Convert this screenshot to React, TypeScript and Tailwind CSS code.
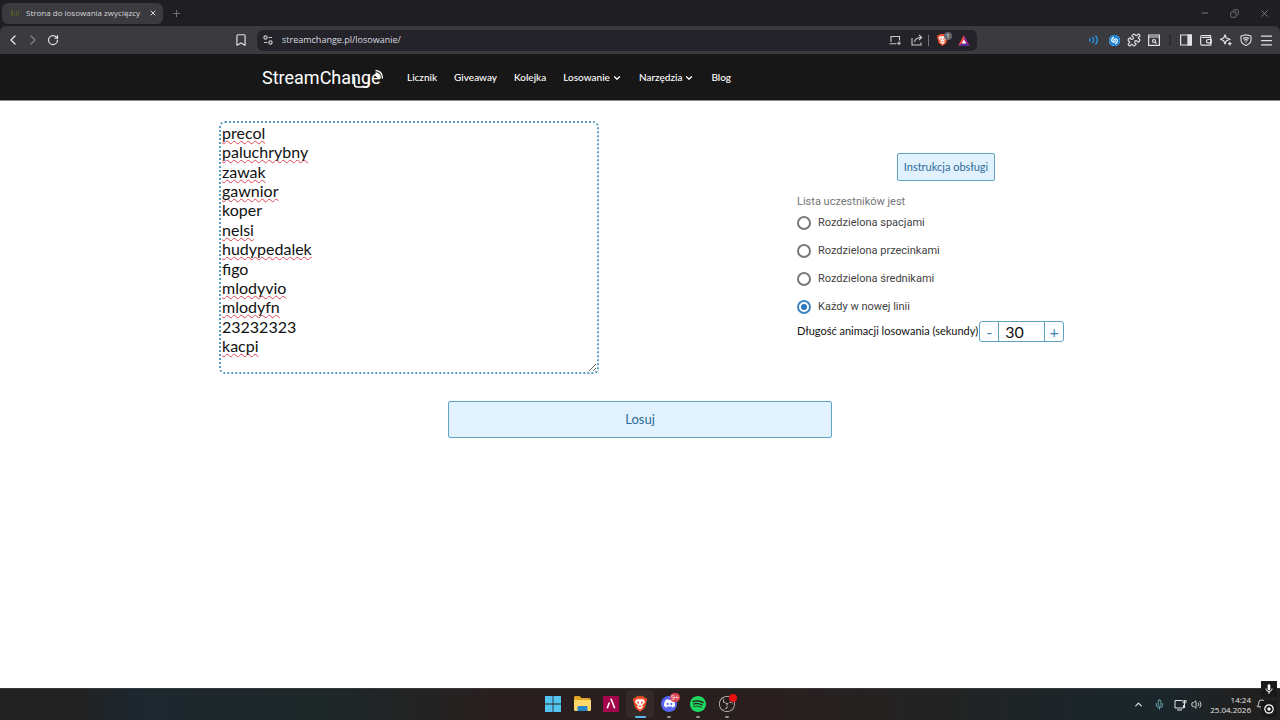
import { useState } from "react";
import type { ReactNode } from "react";
import {
  Bell,
  Bookmark,
  ChevronDown,
  ChevronLeft,
  ChevronRight,
  ChevronUp,
  Copy,
  Menu,
  Mic,
  Minus,
  Plus,
  Puzzle,
  RotateCw,
  Volume2,
  X,
} from "lucide-react";
import { SiDiscord, SiObsstudio, SiShazam, SiSpotify } from "react-icons/si";

const START_NAMES = [
  "precol",
  "paluchrybny",
  "zawak",
  "gawnior",
  "koper",
  "nelsi",
  "hudypedalek",
  "figo",
  "mlodyvio",
  "mlodyfn",
  "23232323",
  "kacpi",
].join("\n");

// words the spell checker leaves alone
const KNOWN_WORDS = ["koper", "figo"];

const NAV_LINKS = [
  { label: "Licznik", menu: false },
  { label: "Giveaway", menu: false },
  { label: "Kolejka", menu: false },
  { label: "Losowanie", menu: true },
  { label: "Narzędzia", menu: true },
  { label: "Blog", menu: false },
];

const SEPARATORS = [
  { value: "space", label: "Rozdzielona spacjami" },
  { value: "comma", label: "Rozdzielona przecinkami" },
  { value: "semicolon", label: "Rozdzielona średnikami" },
  { value: "line", label: "Każdy w nowej linii" },
];

function IconButton({ label, children }: { label: string; children: ReactNode }) {
  return (
    <button aria-label={label} className="flex h-5 w-5 shrink-0 items-center justify-center">
      {children}
    </button>
  );
}

function TabStrip() {
  return (
    <div className="flex h-[26px] items-center pl-[2px] text-[#d6d6da]">
      <div className="flex h-[21px] w-[161px] items-center rounded-md bg-[#3b3a3f] pl-[9px] pr-1">
        <svg viewBox="0 0 8 8" className="mr-[7px] h-2 w-2">
          <path d="M0 1h2v6H0zM3 3h1v4H3zM5 2h1v5H5zM7 1h1v6H7z" fill="#4c5a2c" />
        </svg>
        <span className="flex-1 whitespace-nowrap font-['Open_Sans',sans-serif] text-[8px]">
          Strona do losowania zwycięzcy
        </span>
        <button aria-label="Zamknij kartę" className="flex w-3 justify-center">
          <X size={8} strokeWidth={3} />
        </button>
      </div>
      <button aria-label="Nowa karta" className="ml-2 text-[#77767c]">
        <Plus size={11} strokeWidth={2} />
      </button>
      <div className="ml-auto flex items-center gap-5 pr-[10px] text-[#85848a]">
        <button aria-label="Minimalizuj">
          <Minus size={10} />
        </button>
        <button aria-label="Przywróć">
          <Copy size={9} className="-scale-x-100" />
        </button>
        <button aria-label="Zamknij">
          <X size={11} />
        </button>
      </div>
    </div>
  );
}

function BraveLion({ className }: { className: string }) {
  return (
    <svg viewBox="0 0 22 24" className={className}>
      <path d="M6 0h10l2.500 2.500L21 2.200l1 3.600-1 2.700c-.8 4-2 8.500-3 10L11 24l-7-5.500c-1-1.500-2.200-6-3-10L0 5.800l1-3.600 2.500.3z" fill="#f4502a" />
      <path d="M6 4.500h10l3 3.500-2 3.500-3 2.500 2 2.500-5 4-5-4L8 14l-3-2.500L3 8z" fill="#fff" />
      <path d="M6 8.500 9.500 9l-.5 3-2-1zM16 8.500l-3.500.5.5 3 2-1zM11 14l2.500 1.500L11 17l-2.500-1.500z" fill="#f4502a" />
    </svg>
  );
}

function AddressBar() {
  return (
    <div className="flex h-[21px] flex-1 items-center rounded-md bg-[#242329] pl-[5px] pr-[3px] text-[#c9c9cd]">
      <svg viewBox="0 0 12 12" className="mr-2 h-3 w-3" fill="none" stroke="currentColor" strokeWidth="1.2">
        <circle cx="3.5" cy="3.5" r="1.6" />
        <path d="M6.5 3.5H10M2 8.5h3.5" />
        <circle cx="8.5" cy="8.5" r="1.6" />
      </svg>
      <input
        aria-label="Adres"
        defaultValue="streamchange.pl/losowanie/"
        className="min-w-0 flex-1 bg-transparent font-['Open_Sans',sans-serif] text-[9px] text-[#dcdce0] outline-none"
      />
      <div className="flex gap-[2px]">
        <IconButton label="Wyślij na urządzenie">
          <svg viewBox="0 0 12 12" className="h-3 w-3" fill="none" stroke="currentColor" strokeWidth="1.1">
            <path d="M2 8V2.5h8.500V6.500M.5 9.700h7M8 9.200h4M10 7.200v4" />
          </svg>
        </IconButton>
        <IconButton label="Udostępnij">
          <svg viewBox="0 0 12 12" className="h-3 w-3" fill="none" stroke="currentColor" strokeWidth="1.1">
            <path d="M1 4v7h9V8.500M3.500 8c.5-3 2.500-4.500 7-4.500M8 1l2.700 2.500L8 6" />
          </svg>
        </IconButton>
      </div>
      <span className="mx-px h-[11px] w-px bg-[#77767c]" />
      <button aria-label="Tarcze Brave" className="relative ml-[2px] mr-[2px] flex w-5 justify-center">
        <BraveLion className="h-3 w-[11px]" />
        <span className="absolute -top-[2px] right-0 flex h-2 w-2 items-center justify-center rounded-full bg-[#66656b] font-['Open_Sans',sans-serif] text-[6px] leading-none text-white">
          1
        </span>
      </button>
      <IconButton label="Brave Rewards">
        <svg viewBox="0 0 12 11" className="h-[11px] w-3">
          <path d="M6 0 0 11l6-3.500z" fill="#f0483e" />
          <path d="M6 0l6 11-6-3.500z" fill="#8d2a8f" />
          <path d="M0 11h12L6 7z" fill="#5b2c9c" />
          <path d="M6 4.500 8.300 8.500H3.700z" fill="#fff" />
        </svg>
      </IconButton>
    </div>
  );
}

function BrowserToolbar() {
  return (
    <div className="flex h-7 items-center rounded-t-md bg-[#3b3a3f] text-[#e2e2e5]">
      <div className="flex w-[257px] items-center pl-[3px] pr-[6px]">
        <IconButton label="Wstecz">
          <ChevronLeft size={16} />
        </IconButton>
        <span className="flex text-[#828187]">
          <IconButton label="Dalej">
            <ChevronRight size={16} />
          </IconButton>
        </span>
        <IconButton label="Odśwież">
          <RotateCw size={12} strokeWidth={2.5} />
        </IconButton>
        <span className="flex-1" />
        <IconButton label="Dodaj zakładkę">
          <Bookmark size={14} />
        </IconButton>
      </div>
      <AddressBar />
      <div className="flex w-[303px] items-center justify-end pr-1">
        <IconButton label="Dźwięk">
          <svg viewBox="0 0 12 12" className="h-3 w-3" fill="none" stroke="#2490dc" strokeWidth="1.500">
            <path d="M1.500 4.500c.7 1 .7 2 0 3M4.500 3c1.500 2 1.500 4 0 6M7.500 1.500c2.500 3 2.500 6 0 9" />
          </svg>
        </IconButton>
        <IconButton label="Shazam">
          <span className="rounded-full bg-white text-[#1583dc]">
            <SiShazam size={11} />
          </span>
        </IconButton>
        <IconButton label="Rozszerzenia">
          <Puzzle size={14} />
        </IconButton>
        <IconButton label="Szukaj kart">
          <svg viewBox="0 0 12 12" className="h-3 w-3" fill="none" stroke="currentColor" strokeWidth="1.200">
            <path d="M.6 1h10.800v10.400H.6zM.6 3h10.800M7 8l1.600 1.600" />
            <circle cx="6" cy="7" r="1.500" />
          </svg>
        </IconButton>
        <span className="mx-[5px] h-3 w-[2px] bg-[#2a292e]" />
        <IconButton label="Panel boczny">
          <svg viewBox="0 0 12 12" className="h-3 w-3" fill="none" stroke="currentColor" strokeWidth="1.200">
            <path d="M.6 1h10.800v10H.6z" />
            <path d="M8 1h3.400v10H8z" fill="currentColor" />
          </svg>
        </IconButton>
        <IconButton label="Portfel">
          <svg viewBox="0 0 12 12" className="h-3 w-3" fill="none" stroke="currentColor" strokeWidth="1.200">
            <path d="M10.500 3.200V1.500H2A1.300 1.300 0 0 0 .7 3v7c0 .7.500 1.200 1.200 1.200h8.800V3.300H2" />
            <path d="M11.300 5.500H8.200a1.700 1.700 0 0 0 0 3.400h3.100z" />
          </svg>
        </IconButton>
        <IconButton label="Leo">
          <svg viewBox="0 0 12 12" className="h-3 w-3" fill="none" stroke="currentColor" strokeWidth="1.200" strokeLinejoin="round">
            <path d="M5 .8 6.300 4 10 5.200 6.400 6.700 5 10 3.700 6.700.5 5.300 3.700 4zM9.800 7.800v3.600M8 9.600h3.600" />
          </svg>
        </IconButton>
        <IconButton label="VPN">
          <svg viewBox="0 0 12 12" className="h-3 w-3" fill="none" stroke="currentColor" strokeWidth="1.100" strokeLinejoin="round">
            <path d="M6 .7 11 2v4c0 2.500-2 4.300-5 5.400C3 10.300 1 8.500 1 6V2zM3 4.500c2-1.200 4-1.200 6 0M4 6.200c1.300-.8 2.700-.8 4 0M5.300 8h1.400" />
          </svg>
        </IconButton>
        <IconButton label="Menu">
          <Menu size={15} />
        </IconButton>
      </div>
    </div>
  );
}

function Logo() {
  return (
    <a href="#" className="relative mr-6 block w-[121px] font-['Roboto',sans-serif] text-[18px] leading-6 text-white">
      StreamChange
      <svg viewBox="0 0 32 20" className="absolute right-0 top-[3px] h-5 w-8" fill="none" stroke="currentColor">
        <path d="M3.500 8v7.200c0 2 1 2.800 2.800 2.800h8.400c2 0 2.800-1 2.800-3V8" strokeWidth="1.500" />
        <path d="M24.500 6.500c1.700.2 2.500 1.200 2.500 3M24.500 4c3 .2 4.700 2.300 4.700 5.500M24.500 1.500c4.500.3 6.900 3.300 6.900 8" strokeWidth="1.300" />
      </svg>
    </a>
  );
}

function SiteNav() {
  return (
    <header className="border-b border-[#8a8a8a] bg-[#171717]">
      <div className="mx-auto flex h-[46px] w-full max-w-[756px] items-center pt-px">
        <Logo />
        <nav className="flex items-center gap-[17px] font-['Lato',sans-serif] text-[10px] font-medium text-white">
          {NAV_LINKS.map((link) => (
            <a key={link.label} href="#" className="flex items-center gap-[2px]">
              {link.label}
              {link.menu && <ChevronDown size={10} strokeWidth={3} />}
            </a>
          ))}
        </nav>
      </div>
    </header>
  );
}

function NamesField({ value, onChange }: { value: string; onChange: (value: string) => void }) {
  return (
    <div className="grid h-[253px] w-[380px] font-['Lato',sans-serif] text-[16px] leading-[1.21]">
      {/* draws the spelling marks under the text box */}
      <div
        aria-hidden="true"
        className="col-start-1 row-start-1 overflow-hidden border-2 border-transparent px-px text-transparent"
      >
        {value.split("\n").map((line, idx) => (
          <div key={idx}>
            <span
              className={
                KNOWN_WORDS.includes(line) || /^\d*$/.test(line)
                  ? ""
                  : "underline decoration-[#e0455a] decoration-wavy decoration-1 [text-decoration-skip-ink:none]"
              }
            >
              {line}
            </span>
          </div>
        ))}
      </div>
      <textarea
        aria-label="Lista uczestników"
        value={value}
        onChange={(e) => onChange(e.target.value)}
        spellCheck={false}
        className="col-start-1 row-start-1 resize rounded-md border-2 border-dotted border-[#5a9fc0] bg-transparent px-px text-[#111] outline-none"
      />
    </div>
  );
}

function Options() {
  const [separator, setSeparator] = useState("line");
  const [seconds, setSeconds] = useState(30);

  return (
    <div className="mt-8 flex w-[264px] flex-col">
      <div className="flex justify-center pl-[34px]">
        <button className="h-7 whitespace-nowrap rounded-xs border border-[#5fa3c0] bg-[#e1f1fd] px-[6px] font-['Lato',sans-serif] text-[11px] text-[#2c6d9c]">
          Instrukcja obsługi
        </button>
      </div>
      <fieldset className="mt-[14px] font-['Roboto',sans-serif] text-[11px] text-[#3f3f3f]">
        <legend className="leading-[14px] text-[#757575]">Lista uczestników jest</legend>
        {SEPARATORS.map((item) => (
          <label key={item.value} className="flex h-7 items-center gap-[7px]">
            <input
              type="radio"
              name="separator"
              value={item.value}
              checked={separator === item.value}
              onChange={() => setSeparator(item.value)}
              className="grid size-[14px] appearance-none place-content-center rounded-full border-2 border-[#7a7a7a] checked:border-[#3c86c6] checked:before:size-[6px] checked:before:rounded-full checked:before:bg-[#2878be]"
            />
            {item.label}
          </label>
        ))}
      </fieldset>
      <div className="flex items-center gap-px whitespace-nowrap font-['Lato',sans-serif]">
        <label htmlFor="seconds" className="text-[11px] text-[#111]">
          Długość animacji losowania (sekundy)
        </label>
        <div className="flex h-[21px] shrink-0 rounded-[3px] border border-[#5fa3c0] text-[#3c87b8]">
          <button aria-label="Mniej" className="w-[18px] text-[16px] leading-none" onClick={() => setSeconds(seconds - 1)}>
            -
          </button>
          <input
            id="seconds"
            value={seconds}
            onChange={(e) => setSeconds(Number(e.target.value) || 0)}
            className="w-[47px] border-x border-[#5fa3c0] px-[6px] text-[16px] leading-none text-[#111] outline-none"
          />
          <button aria-label="Więcej" className="w-[18px] text-[16px] leading-none" onClick={() => setSeconds(seconds + 1)}>
            +
          </button>
        </div>
      </div>
    </div>
  );
}

function TaskbarApp({ label, mark, children }: { label: string; mark?: string; children: ReactNode }) {
  return (
    <button
      aria-label={label}
      className={"relative flex h-7 w-7 items-center justify-center rounded-sm " + (mark === "active" ? "bg-white/5" : "")}
    >
      {children}
      {mark === "active" && <span className="absolute bottom-0 h-[2px] w-[11px] rounded-full bg-[#5cb8ea]" />}
      {mark === "open" && <span className="absolute bottom-0 h-[2px] w-1 rounded-full bg-[#96918f]" />}
    </button>
  );
}

function Taskbar() {
  return (
    <footer className="relative grid h-8 grid-cols-[1fr_auto_1fr] items-center border-t border-[#38383a] bg-[#2a1f1f]">
      <div className="h-full bg-[linear-gradient(90deg,#222222_15%,#1c272f_25%,#1e2829_60%,#232323_78%,#2a1f1f_92%)]" />
      <div className="flex gap-px pb-[2px]">
        <TaskbarApp label="Start">
          <svg viewBox="0 0 16 16" className="h-4 w-4" fill="#55c3f0">
            <path d="M0 0h7.600v7.600H0zM8.400 0H16v7.600H8.400zM0 8.400h7.600V16H0zM8.400 8.400H16V16H8.400z" />
          </svg>
        </TaskbarApp>
        <TaskbarApp label="Eksplorator plików">
          <svg viewBox="0 0 17 15" className="h-[15px] w-[17px]">
            <path d="M0 1.500C0 .7.700 0 1.500 0h4l2 2H15c1 0 1.500.5 1.500 1.500V14H0z" fill="#e0a526" />
            <path d="M0 4h17v9.500c0 .8-.5 1.500-1.500 1.500h-14C.500 15 0 14.300 0 13.500z" fill="#fbd768" />
            <path d="M3.500 15v-3.500c0-1 .5-1.500 1.500-1.500h7c1 0 1.500.5 1.500 1.500V15z" fill="#2487c9" />
          </svg>
        </TaskbarApp>
        <TaskbarApp label="Lambda">
          <svg viewBox="0 0 16 16" className="h-4 w-4">
            <path d="M0 0h16v16H0z" fill="#a3064b" />
            <path d="M4.200 12.300 6.400 6.500M7.300 3.500h1l3.400 8.800" fill="none" stroke="#fff" strokeWidth="1.600" />
          </svg>
        </TaskbarApp>
        <TaskbarApp label="Brave" mark="active">
          <BraveLion className="h-4 w-[14px]" />
        </TaskbarApp>
        <TaskbarApp label="Discord" mark="open">
          <span className="flex h-4 w-4 items-center justify-center rounded-full bg-[#5865f2] text-white">
            <SiDiscord size={11} />
          </span>
          <span className="absolute right-[3px] top-[3px] flex h-[9px] w-[10px] items-center justify-center rounded-full bg-[#d9434e] font-['Open_Sans',sans-serif] text-[7px] leading-none text-white">
            9+
          </span>
        </TaskbarApp>
        <TaskbarApp label="Spotify" mark="open">
          <SiSpotify size={16} color="#1ed760" />
        </TaskbarApp>
        <TaskbarApp label="OBS Studio" mark="open">
          <SiObsstudio size={16} color="#d0cfcf" />
          <span className="absolute right-1 top-1 h-2 w-2 rounded-full bg-[#e81010]" />
        </TaskbarApp>
      </div>
      <div className="flex h-full items-center justify-end bg-[linear-gradient(90deg,#2a1f1f_5%,#232323_35%,#1a262b_70%,#1b262b_80%,#202020_92%)] pr-[13px] text-[#e6e6e6]">
        <button aria-label="Ukryte ikony" className="mr-[10px]">
          <ChevronUp size={11} strokeWidth={2.5} />
        </button>
        <Mic size={11} className="mr-[9px] text-[#6fb7bd]" />
        <svg viewBox="0 0 13 12" className="mr-1 h-3 w-[13px]" fill="none" stroke="currentColor">
          <path d="M8 1.500H1v7.500h8.500V6M3 11h5M10.500 1v3.500M9 1v2.500c0 1 3 1 3 0V1M10.500 4.500V9" />
        </svg>
        <Volume2 size={11} className="mr-1" />
        <div className="mr-[5px] pl-1 text-right font-['Open_Sans',sans-serif] text-[8px] leading-[10px]">
          <div>14:24</div>
          <div>25.04.2026</div>
        </div>
        <Bell size={11} />
      </div>
      {/* recording overlay */}
      <div className="absolute bottom-[3px] right-[3px] flex flex-col gap-1 text-white">
        <span className="flex h-4 w-4 items-center justify-center bg-[#19191b]">
          <svg viewBox="0 0 10 10" className="h-[10px] w-[10px]" fill="none" stroke="currentColor">
            <path d="M5 1.500v3.500" strokeWidth="2.600" strokeLinecap="round" />
            <path d="M2 4.500c0 4 6 4 6 0M5 7.500V10" />
          </svg>
        </span>
        <span className="flex h-4 w-4 items-center justify-center bg-[#19191b]">
          <svg viewBox="0 0 10 10" className="h-[10px] w-[10px]">
            <circle cx="5" cy="5" r="4.200" fill="none" stroke="currentColor" strokeWidth="1.200" />
            <circle cx="5" cy="5" r="1.700" fill="currentColor" />
          </svg>
        </span>
      </div>
    </footer>
  );
}

export default function App() {
  const [names, setNames] = useState(START_NAMES);

  return (
    <div className="flex min-h-screen flex-col bg-white">
      <div className="bg-[#1f1e23]">
        <TabStrip />
        <BrowserToolbar />
      </div>
      <SiteNav />
      <main className="flex-1 pt-5">
        <div className="mx-auto flex w-full max-w-[842px] justify-between">
          <NamesField value={names} onChange={setNames} />
          <Options />
        </div>
        <button className="mx-auto mt-[27px] block h-[37px] w-[30%] rounded-xs border border-[#5fa3c0] bg-[#e1f1fd] font-['Lato',sans-serif] text-[13px] text-[#2c6d9c]">
          Losuj
        </button>
      </main>
      <Taskbar />
    </div>
  );
}
